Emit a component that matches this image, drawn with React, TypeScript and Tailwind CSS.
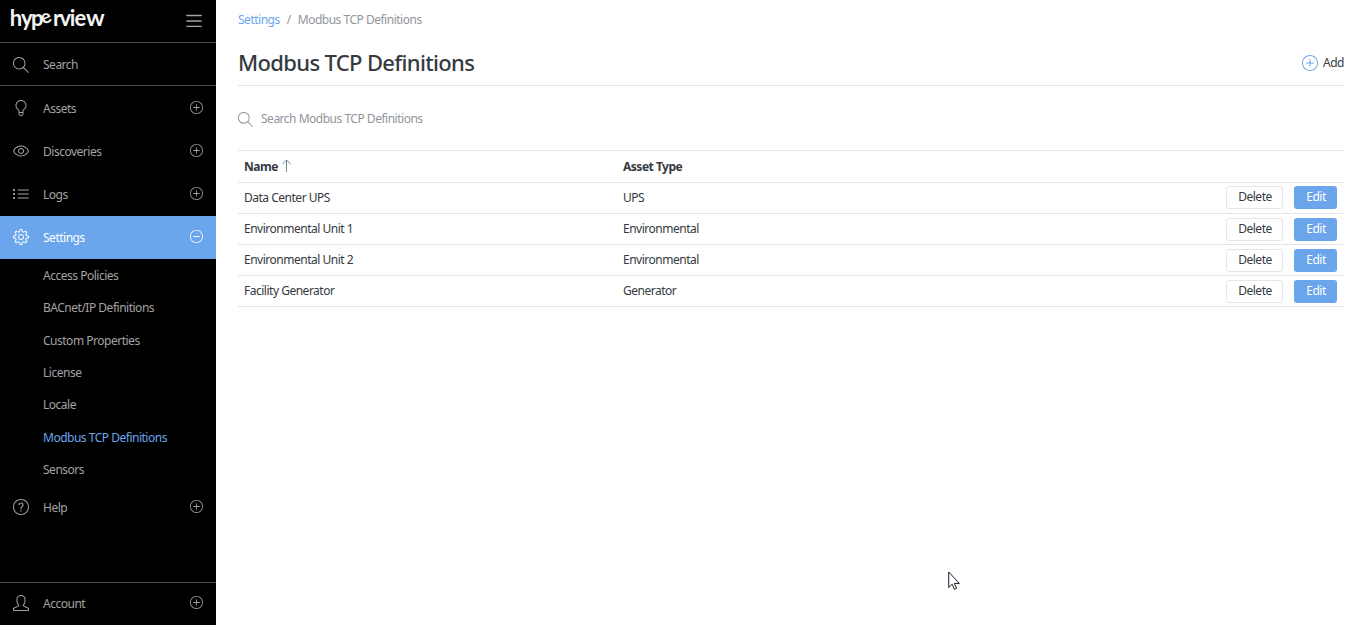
import type { IconType } from "react-icons";
import {
  SlBulb,
  SlEye,
  SlList,
  SlMagnifier,
  SlMenu,
  SlMinus,
  SlPlus,
  SlQuestion,
  SlSettings,
  SlUser,
} from "react-icons/sl";

const subItems = [
  "Access Policies",
  "BACnet/IP Definitions",
  "Custom Properties",
  "License",
  "Locale",
  "Modbus TCP Definitions",
  "Sensors",
];

const rows = [
  { name: "Data Center UPS", type: "UPS" },
  { name: "Environmental Unit 1", type: "Environmental" },
  { name: "Environmental Unit 2", type: "Environmental" },
  { name: "Facility Generator", type: "Generator" },
];

function NavItem({ icon: Icon, label, active = false }: { icon: IconType; label: string; active?: boolean }) {
  const Toggle = active ? SlMinus : SlPlus;
  return (
    <a
      className={
        active
          ? "flex h-[43px] shrink-0 items-center bg-[#6ba5ec] pr-[13px] pl-[13px] text-white"
          : "flex h-[43px] shrink-0 items-center pr-[13px] pl-[13px] text-[#a3a3a3]"
      }
    >
      <Icon className="mb-px size-4" />
      <span className="ml-[14px] flex-1 pt-px">{label}</span>
      <Toggle className="relative -top-px size-[13px]" />
    </a>
  );
}

function Logo() {
  return (
    <svg className="h-[42px] w-[120px]" viewBox="0 0 120 42" fill="#f4f4f4">
      <g className="font-['Lato'] text-[22px] font-bold tracking-normal">
        <text x="9.8 21 31" y="26">
          hyp
        </text>
        <text className="text-[19px]" transform="translate(43.6 24.8) rotate(-24)">
          e
        </text>
        <text x="53 59.6 69.8 74.6" y="26">
          rvie
        </text>
        <text transform="translate(86 26) scale(1.06 1)">w</text>
      </g>
    </svg>
  );
}

function Sidebar() {
  return (
    <nav className="flex w-[216px] shrink-0 flex-col bg-black">
      <div className="flex h-[43px] shrink-0 items-center justify-between border-b border-[#4a4a4a] pr-[14px]">
        <Logo />
        <SlMenu className="size-4 text-[#a3a3a3]" />
      </div>
      <div className="mb-px flex h-[43px] shrink-0 items-center border-b border-[#4a4a4a] pl-[13px] text-[#a3a3a3]">
        <SlMagnifier className="mt-px size-4" />
        <span className="ml-[14px] pt-[2px]">Search</span>
      </div>
      <NavItem icon={SlBulb} label="Assets" />
      <NavItem icon={SlEye} label="Discoveries" />
      <NavItem icon={SlList} label="Logs" />
      <NavItem icon={SlSettings} label="Settings" active />
      <ul className="shrink-0">
        {subItems.map((item) => (
          <li
            key={item}
            className={
              item === "Modbus TCP Definitions"
                ? "flex h-[32.43px] items-center pt-px pl-[43px] text-[#6ba5ec]"
                : "flex h-[32.43px] items-center pt-px pl-[43px] text-[#a3a3a3]"
            }
          >
            {item}
          </li>
        ))}
      </ul>
      <div className="pt-[0.4px]">
        <NavItem icon={SlQuestion} label="Help" />
      </div>
      <div className="mt-auto h-[43px] border-t border-[#4a4a4a]">
        <div className="-mt-px">
          <NavItem icon={SlUser} label="Account" />
        </div>
      </div>
    </nav>
  );
}

export default function App() {
  return (
    <div className="flex h-[625px] w-[1366px] overflow-hidden bg-white font-['Noto_Sans',sans-serif] text-[12px] leading-4 tracking-[-0.49px] text-[#343a40]">
      <Sidebar />
      <main className="flex flex-1 flex-col pr-[22px] pl-[22px]">
        <div className="mt-3 flex h-4 gap-[7px] text-[#8f959b]">
          <a className="text-[#6ba5ec]">Settings</a>
          <span>/</span>
          <span>Modbus TCP Definitions</span>
        </div>
        <header className="mt-[14px] flex h-[44px] items-center justify-between border-b border-[#e3e5e7] pb-px">
          <h1 className="pb-[2px] text-[22px] font-medium tracking-[-0.66px]">Modbus TCP Definitions</h1>
          <button className="flex items-center gap-[5px] pb-px">
            <SlPlus className="size-4 text-[#6ba5ec]" />
            Add
          </button>
        </header>
        <div className="mt-[25px] flex h-4 items-center gap-[8px] text-[#8f959b]">
          <SlMagnifier className="size-[15px]" />
          <span>Search Modbus TCP Definitions</span>
        </div>
        <section className="mt-[23px] border-t border-[#e3e5e7]">
          <div className="flex h-8 items-center border-b border-[#e3e5e7] pl-[6px] font-bold">
            <div className="flex w-[379px] items-center gap-[3px]">
              Name
              <svg className="relative -top-px size-[13px]" viewBox="0 0 13 13" fill="none" stroke="#6f8797">
                <path d="M5.5 13V1M1.5 5l4-4 4 4" />
              </svg>
            </div>
            <div>Asset Type</div>
          </div>
          {rows.map((row) => (
            <div
              key={row.name}
              className="group flex h-[31px] items-center border-b border-[#e3e5e7] pr-[7px] pl-[6px]"
            >
              <div className="w-[379px]">{row.name}</div>
              <div className="flex-1">{row.type}</div>
              <div className="flex gap-[11px] pt-px group-[:nth-child(2)]:pt-0 group-[:nth-child(2)]:pb-px">
                <button className="h-[23px] w-[57px] rounded-[3px] border border-[#e3e5e7] pb-px pl-px">Delete</button>
                <button className="h-[23px] w-[43px] rounded-[3px] bg-[#6ba5ec] pb-px pl-px text-white">Edit</button>
              </div>
            </div>
          ))}
        </section>
      </main>
      <svg className="absolute top-[571px] left-[948px] h-[20px] w-[13px]" viewBox="0 0 13 20" fill="white" stroke="#1a1a2a">
        <path d="M.7 1v15.5l3.5-3.3 2.2 5.2 2.2-1-2.2-5h5z" />
      </svg>
    </div>
  );
}
